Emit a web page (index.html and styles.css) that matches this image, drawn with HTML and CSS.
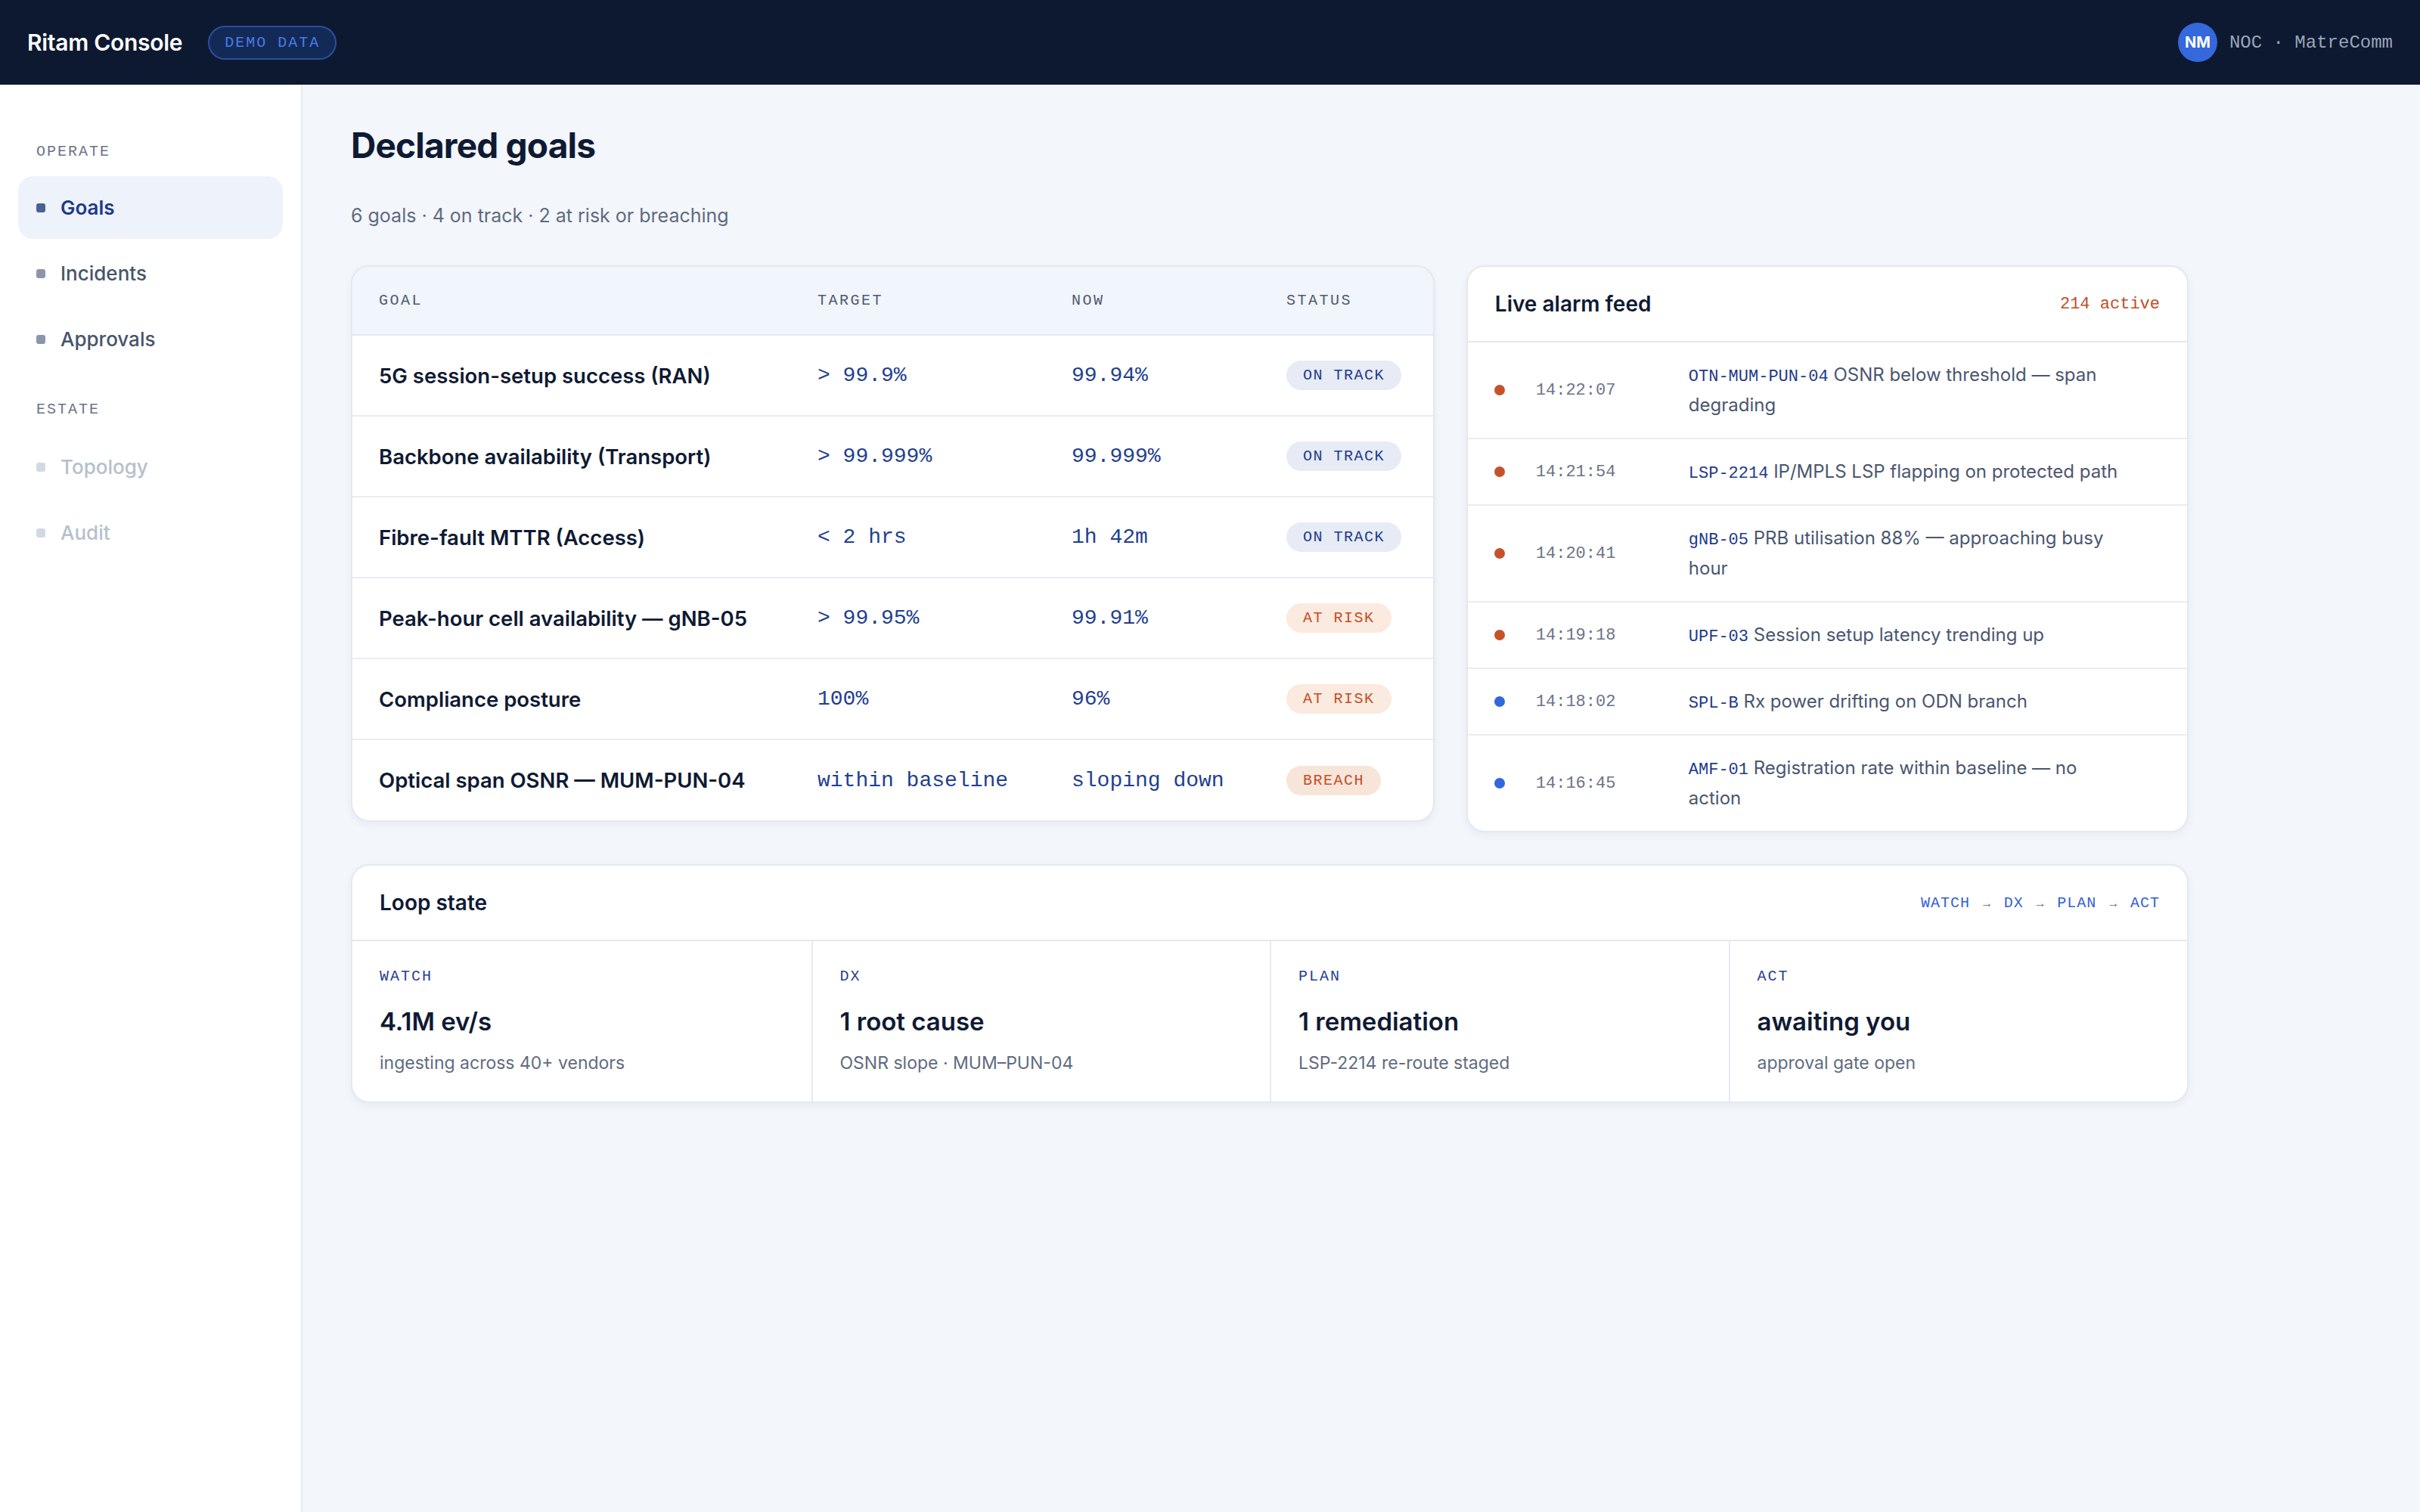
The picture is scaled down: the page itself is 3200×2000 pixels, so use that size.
FILE: index.html
```html
<!DOCTYPE html>
<html lang="en">
<head>
    <meta charset="UTF-8">
    <title>Ritam Console</title>
    <link rel="stylesheet" href="styles.css">
</head>
<body>
    <!-- Top bar -->
    <header class="topbar">
        <div class="brand">
            <span class="brand-name">Ritam Console</span>
            <span class="demo-pill">DEMO DATA</span>
        </div>
        <div class="user">
            <span class="avatar">NM</span>
            <span class="user-org">NOC · MatreComm</span>
        </div>
    </header>

    <div class="layout">
        <!-- Sidebar -->
        <aside class="sidebar">
            <div class="nav-label">OPERATE</div>
            <nav class="nav-group">
                <a class="nav-item active" href="#goals"><span class="nav-dot"></span>Goals</a>
                <a class="nav-item" href="#incidents"><span class="nav-dot"></span>Incidents</a>
                <a class="nav-item" href="#approvals"><span class="nav-dot"></span>Approvals</a>
            </nav>
            <div class="nav-label estate">ESTATE</div>
            <nav class="nav-group">
                <a class="nav-item muted" href="#topology"><span class="nav-dot"></span>Topology</a>
                <a class="nav-item muted" href="#audit"><span class="nav-dot"></span>Audit</a>
            </nav>
        </aside>

        <!-- Main -->
        <main class="main">
            <h1>Declared goals</h1>
            <p class="subtitle">6 goals · 4 on track · 2 at risk or breaching</p>

            <div class="top-grid">
                <!-- Goals table -->
                <section class="card goals-card">
                    <table class="goals">
                        <colgroup>
                            <col class="c-goal">
                            <col class="c-target">
                            <col class="c-now">
                            <col>
                        </colgroup>
                        <thead>
                            <tr>
                                <th>GOAL</th>
                                <th>TARGET</th>
                                <th>NOW</th>
                                <th>STATUS</th>
                            </tr>
                        </thead>
                        <tbody>
                            <tr>
                                <td class="goal-name">5G session-setup success (RAN)</td>
                                <td class="mono-val">&gt; 99.9%</td>
                                <td class="mono-val">99.94%</td>
                                <td><span class="status ok">ON TRACK</span></td>
                            </tr>
                            <tr>
                                <td class="goal-name">Backbone availability (Transport)</td>
                                <td class="mono-val">&gt; 99.999%</td>
                                <td class="mono-val">99.999%</td>
                                <td><span class="status ok">ON TRACK</span></td>
                            </tr>
                            <tr>
                                <td class="goal-name">Fibre-fault MTTR (Access)</td>
                                <td class="mono-val">&lt; 2 hrs</td>
                                <td class="mono-val">1h 42m</td>
                                <td><span class="status ok">ON TRACK</span></td>
                            </tr>
                            <tr>
                                <td class="goal-name">Peak-hour cell availability — gNB-05</td>
                                <td class="mono-val">&gt; 99.95%</td>
                                <td class="mono-val">99.91%</td>
                                <td><span class="status risk">AT RISK</span></td>
                            </tr>
                            <tr>
                                <td class="goal-name">Compliance posture</td>
                                <td class="mono-val">100%</td>
                                <td class="mono-val">96%</td>
                                <td><span class="status risk">AT RISK</span></td>
                            </tr>
                            <tr>
                                <td class="goal-name">Optical span OSNR — MUM-PUN-04</td>
                                <td class="mono-val">within baseline</td>
                                <td class="mono-val">sloping down</td>
                                <td><span class="status breach">BREACH</span></td>
                            </tr>
                        </tbody>
                    </table>
                </section>

                <!-- Alarm feed -->
                <section class="card feed-card">
                    <div class="card-head">
                        <h2>Live alarm feed</h2>
                        <span class="active-count">214 active</span>
                    </div>
                    <ul class="feed">
                        <li>
                            <span class="dot warn"></span>
                            <span class="time">14:22:07</span>
                            <p class="msg"><code>OTN-MUM-PUN-04</code> OSNR below threshold — span degrading</p>
                        </li>
                        <li>
                            <span class="dot warn"></span>
                            <span class="time">14:21:54</span>
                            <p class="msg"><code>LSP-2214</code> IP/MPLS LSP flapping on protected path</p>
                        </li>
                        <li>
                            <span class="dot warn"></span>
                            <span class="time">14:20:41</span>
                            <p class="msg"><code>gNB-05</code> PRB utilisation 88% — approaching busy hour</p>
                        </li>
                        <li>
                            <span class="dot warn"></span>
                            <span class="time">14:19:18</span>
                            <p class="msg"><code>UPF-03</code> Session setup latency trending up</p>
                        </li>
                        <li>
                            <span class="dot info"></span>
                            <span class="time">14:18:02</span>
                            <p class="msg"><code>SPL-B</code> Rx power drifting on ODN branch</p>
                        </li>
                        <li>
                            <span class="dot info"></span>
                            <span class="time">14:16:45</span>
                            <p class="msg"><code>AMF-01</code> Registration rate within baseline — no action</p>
                        </li>
                    </ul>
                </section>
            </div>

            <!-- Loop state -->
            <section class="card loop-card">
                <div class="card-head">
                    <h2>Loop state</h2>
                    <span class="loop-path">WATCH <i>→</i> DX <i>→</i> PLAN <i>→</i> ACT</span>
                </div>
                <div class="loop-grid">
                    <div class="loop-cell">
                        <div class="loop-label">WATCH</div>
                        <div class="loop-value">4.1M ev/s</div>
                        <div class="loop-sub">ingesting across 40+ vendors</div>
                    </div>
                    <div class="loop-cell">
                        <div class="loop-label">DX</div>
                        <div class="loop-value">1 root cause</div>
                        <div class="loop-sub">OSNR slope · MUM–PUN-04</div>
                    </div>
                    <div class="loop-cell">
                        <div class="loop-label">PLAN</div>
                        <div class="loop-value">1 remediation</div>
                        <div class="loop-sub">LSP-2214 re-route staged</div>
                    </div>
                    <div class="loop-cell">
                        <div class="loop-label">ACT</div>
                        <div class="loop-value">awaiting you</div>
                        <div class="loop-sub">approval gate open</div>
                    </div>
                </div>
            </section>
        </main>
    </div>
</body>
</html>
```

FILE: styles.css
```css
/* Basic Reset */
* {
    box-sizing: border-box;
    margin: 0;
    padding: 0;
}

body {
    font-family: Inter, "Noto Sans", sans-serif;
    background: #f3f6fb;
    color: #0f1a33;
    min-height: 100vh;
    display: flex;
    flex-direction: column;
}

/* Top bar */
.topbar {
    height: 112px;
    background: #0d1930;
    display: flex;
    align-items: center;
    justify-content: space-between;
    padding: 0 36px;
}

.brand {
    display: flex;
    align-items: center;
    gap: 34px;
}

.brand-name {
    color: #fff;
    font-size: 30px;
    font-weight: 600;
    letter-spacing: -0.3px;
}

.demo-pill {
    font-family: "Liberation Mono", monospace;
    font-size: 20px;
    letter-spacing: 2px;
    color: #4a7ae6;
    background: #132a57;
    border: 2px solid #2b4f9e;
    border-radius: 24px;
    padding: 9px 20px;
}

.user {
    display: flex;
    align-items: center;
    gap: 16px;
}

.avatar {
    width: 52px;
    height: 52px;
    border-radius: 50%;
    background: #3468dc;
    color: #fff;
    font-size: 20px;
    font-weight: 700;
    display: flex;
    align-items: center;
    justify-content: center;
}

.user-org {
    font-family: "Liberation Mono", monospace;
    font-size: 24px;
    color: #9aa5b8;
}

/* Layout */
.layout {
    flex: 1;
    display: flex;
}

.sidebar {
    width: 400px;
    flex-shrink: 0;
    background: #fff;
    border-right: 2px solid #e6eaf1;
    padding: 74px 24px 24px;
}

.nav-label {
    font-family: "Liberation Mono", monospace;
    font-size: 20px;
    letter-spacing: 2px;
    line-height: 30px;
    color: #6b7589;
    padding-left: 24px;
    margin-bottom: 17px;
}

.nav-label.estate {
    margin-top: 37px;
    margin-bottom: 19px;
}

.nav-group {
    display: flex;
    flex-direction: column;
    gap: 4px;
}

.nav-item {
    height: 83px;
    display: flex;
    align-items: center;
    gap: 20px;
    padding-left: 24px;
    border-radius: 20px;
    font-size: 26px;
    font-weight: 500;
    color: #475569;
    text-decoration: none;
}

.nav-dot {
    width: 12px;
    height: 12px;
    border-radius: 3px;
    background: #8c96ab;
}

.nav-item.active {
    background: #eef2fb;
    color: #1e3a8a;
    font-weight: 600;
}

.nav-item.active .nav-dot {
    background: #4b5f99;
}

.nav-item.muted {
    color: #b6bfcd;
}

.nav-item.muted .nav-dot {
    background: #d3d9e3;
}

/* Main */
.main {
    flex: 1;
    padding: 52px 64px 64px;
}

.main > * {
    max-width: 2430px;
}

h1 {
    font-size: 46px;
    font-weight: 700;
    letter-spacing: -0.8px;
    line-height: 56px;
    color: #0f1a33;
}

.subtitle {
    margin-top: 46px;
    font-size: 25px;
    line-height: 38px;
    color: #5f6b80;
}

.top-grid {
    display: grid;
    grid-template-columns: 3fr 2fr;
    gap: 42px;
    align-items: start;
    margin-top: 47px;
}

.card {
    background: #fff;
    border: 2px solid #e3e8f1;
    border-radius: 24px;
    box-shadow: 0 4px 12px rgba(15, 26, 51, 0.05);
    overflow: hidden;
}

/* Goals table */
.goals {
    width: 100%;
    border-collapse: collapse;
    table-layout: fixed;
}

.c-goal { width: 615px; }
.c-target { width: 336px; }
.c-now { width: 284px; }

.goals th {
    height: 90px;
    background: #f1f5fc;
    border-bottom: 2px solid #e3e8f1;
    text-align: left;
    font-family: "Liberation Mono", monospace;
    font-size: 20px;
    font-weight: 400;
    letter-spacing: 2.5px;
    color: #505a6e;
}

.goals td {
    height: 107px;
    border-bottom: 2px solid #e8ecf3;
}

.goals tr:last-child td {
    border-bottom: none;
}

.goals th:first-child,
.goals td:first-child {
    padding-left: 35px;
}

.goal-name {
    font-size: 27.5px;
    font-weight: 600;
    color: #0f1a33;
}

.mono-val {
    font-family: "Liberation Mono", monospace;
    font-size: 28px;
    color: #223f8f;
}

.status {
    display: inline-block;
    font-family: "Liberation Mono", monospace;
    font-size: 20px;
    letter-spacing: 1.5px;
    line-height: 39px;
    padding: 0 22px;
    border-radius: 20px;
}

.status.ok {
    background: #e6ebf5;
    color: #1e3a8a;
}

.status.risk {
    background: #fbeadf;
    color: #c24e26;
}

.status.breach {
    background: #f8e5da;
    color: #c24e26;
}

/* Card head */
.card-head {
    height: 100px;
    display: flex;
    align-items: center;
    justify-content: space-between;
    padding: 0 36px;
    border-bottom: 2px solid #e3e8f1;
}

.card-head h2 {
    font-size: 28px;
    font-weight: 600;
    color: #0f1a33;
}

.active-count {
    font-family: "Liberation Mono", monospace;
    font-size: 22px;
    color: #c24e26;
}

/* Alarm feed */
.feed {
    list-style: none;
}

.feed li {
    display: grid;
    grid-template-columns: 55px 202px 1fr;
    align-items: center;
    padding: 23px 80px 23px 35px;
    border-bottom: 2px solid #e8ecf3;
}

.feed li:last-child {
    border-bottom: none;
}

.dot {
    width: 14px;
    height: 14px;
    border-radius: 50%;
}

.dot.warn { background: #c4532b; }
.dot.info { background: #3366dd; }

.time {
    font-family: "Liberation Mono", monospace;
    font-size: 22px;
    color: #6b7488;
}

.msg {
    font-size: 24px;
    line-height: 40px;
    color: #4a5670;
}

.msg code {
    font-family: "Liberation Mono", monospace;
    font-size: 22px;
    line-height: 1;
    color: #1e3a8a;
}

/* Loop state */
.loop-card {
    margin-top: 42px;
}

.loop-path {
    font-family: "Liberation Mono", monospace;
    font-size: 20px;
    letter-spacing: 1px;
    color: #3461d6;
}

.loop-path i {
    font-style: normal;
    font-size: 16px;
    color: #5b6c90;
    margin: 0 4px;
}

.loop-grid {
    display: grid;
    grid-template-columns: repeat(4, 1fr);
}

.loop-cell {
    padding: 33px 36px 34px;
    border-left: 2px solid #e6eaf1;
}

.loop-cell:first-child {
    border-left: none;
}

.loop-label {
    font-family: "Liberation Mono", monospace;
    font-size: 20px;
    letter-spacing: 2px;
    line-height: 28px;
    color: #2b3f8f;
}

.loop-value {
    margin-top: 23px;
    font-size: 33px;
    font-weight: 600;
    line-height: 44px;
    color: #0f1a33;
}

.loop-sub {
    margin-top: 16px;
    font-size: 23px;
    line-height: 34px;
    color: #5f6b80;
}
```
